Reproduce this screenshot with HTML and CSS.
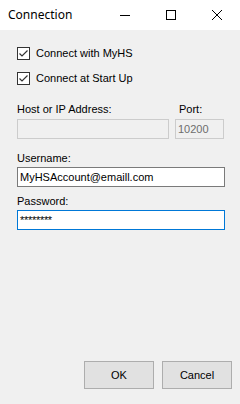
FILE: index.html
```html
<!DOCTYPE html>
<html>
<head>
<meta charset="utf-8">
<link rel="stylesheet" href="styles.css">
</head>
<body>
<div class="window">
  <div class="titlebar">
    <div class="title">Connection</div>
    <div class="caption-btn"><svg width="10" height="10" viewBox="0 0 10 10"><path d="M0 5.5H10" stroke="#000" stroke-width="1"/></svg></div>
    <div class="caption-btn"><svg width="10" height="10" viewBox="0 0 10 10"><rect x="0.5" y="0.5" width="9" height="9" fill="none" stroke="#000" stroke-width="1"/></svg></div>
    <div class="caption-btn"><svg width="10" height="10" viewBox="0 0 10 10"><path d="M0 0L10 10M10 0L0 10" stroke="#000" stroke-width="1"/></svg></div>
  </div>
  <div class="content">
    <div class="check-row">
      <span class="checkbox"><svg width="11" height="11" viewBox="0 0 11 11"><path d="M1.5 5.5L4 8L9.5 2.5" fill="none" stroke="#333" stroke-width="1.2"/></svg></span>
      <span class="check-label">Connect with MyHS</span>
    </div>
    <div class="check-row second">
      <span class="checkbox"><svg width="11" height="11" viewBox="0 0 11 11"><path d="M1.5 5.5L4 8L9.5 2.5" fill="none" stroke="#333" stroke-width="1.2"/></svg></span>
      <span class="check-label">Connect at Start Up</span>
    </div>
    <div class="host-row">
      <div class="host-col">
        <div class="label">Host or IP Address:</div>
        <div class="field disabled host-field"></div>
      </div>
      <div class="port-col">
        <div class="label port-label">Port:</div>
        <div class="field disabled port-field">10200</div>
      </div>
    </div>
    <div class="label user-label">Username:</div>
    <div class="field normal">MyHSAccount@emaill.com</div>
    <div class="label pass-label">Password:</div>
    <div class="field focused pass">********</div>
  </div>
  <div class="footer">
    <div class="btn">OK</div>
    <div class="btn">Cancel</div>
  </div>
</div>
</body>
</html>
```

FILE: styles.css
```css
html, body {
  margin: 0;
  padding: 0;
}
body {
  width: 240px;
  height: 404px;
  background: #f0f0f0;
  font-family: "Liberation Sans", Arial, sans-serif;
  font-size: 11px;
  color: #000;
}
.window {
  height: 404px;
  display: flex;
  flex-direction: column;
}
.titlebar {
  height: 30px;
  background: #fff;
  display: flex;
  align-items: center;
  flex-shrink: 0;
}
.title {
  flex: 1;
  padding-left: 8px;
  font-family: "Noto Sans", "Open Sans", sans-serif;
  font-size: 12px;
  color: #000;
  margin-top: -1px;
}
.caption-btn {
  width: 46px;
  height: 30px;
  display: flex;
  align-items: center;
  justify-content: center;
}
.caption-btn svg {
  display: block;
}
.content {
  padding: 17px 16px 0 17px;
}
.check-row {
  display: flex;
  align-items: center;
  height: 13px;
}
.check-row.second {
  margin-top: 12px;
}
.checkbox {
  width: 11px;
  height: 11px;
  border: 1px solid #333;
  background: #fff;
  display: flex;
  align-items: center;
  justify-content: center;
}
.checkbox svg {
  display: block;
}
.check-label {
  margin-left: 6px;
  line-height: 13px;
}
.label {
  line-height: 13px;
  height: 13px;
}
.host-row {
  display: flex;
  margin-top: 18px;
}
.host-col {
  width: 152px;
}
.port-col {
  margin-left: 6px;
  width: 49px;
}
.port-label {
  padding-left: 4px;
}
.field {
  box-sizing: border-box;
  height: 20px;
  border: 1px solid #7a7a7a;
  background: #fff;
  line-height: 18px;
  padding-left: 2px;
  white-space: nowrap;
  overflow: hidden;
}
.host-col .field, .port-col .field {
  margin-top: 3px;
}
.field.disabled {
  border-color: #cccccc;
  background: #f0f0f0;
  color: #6d6d6d;
}
.field.normal {
  margin-top: 2px;
  width: 208px;
}
.field.focused {
  border-color: #0078d7;
  margin-top: 2px;
  width: 208px;
}
.field.pass {
  font-size: 11px;
  letter-spacing: -0.3px;
  line-height: 18px;
}
.user-label {
  margin-top: 13px;
}
.pass-label {
  margin-top: 8px;
}
.footer {
  margin-top: auto;
  display: flex;
  justify-content: flex-end;
  gap: 8px;
  padding: 0 8px 15px 0;
}
.btn {
  box-sizing: border-box;
  width: 70px;
  height: 28px;
  background: #e1e1e1;
  border: 1px solid #adadad;
  display: flex;
  align-items: center;
  justify-content: center;
}
```
